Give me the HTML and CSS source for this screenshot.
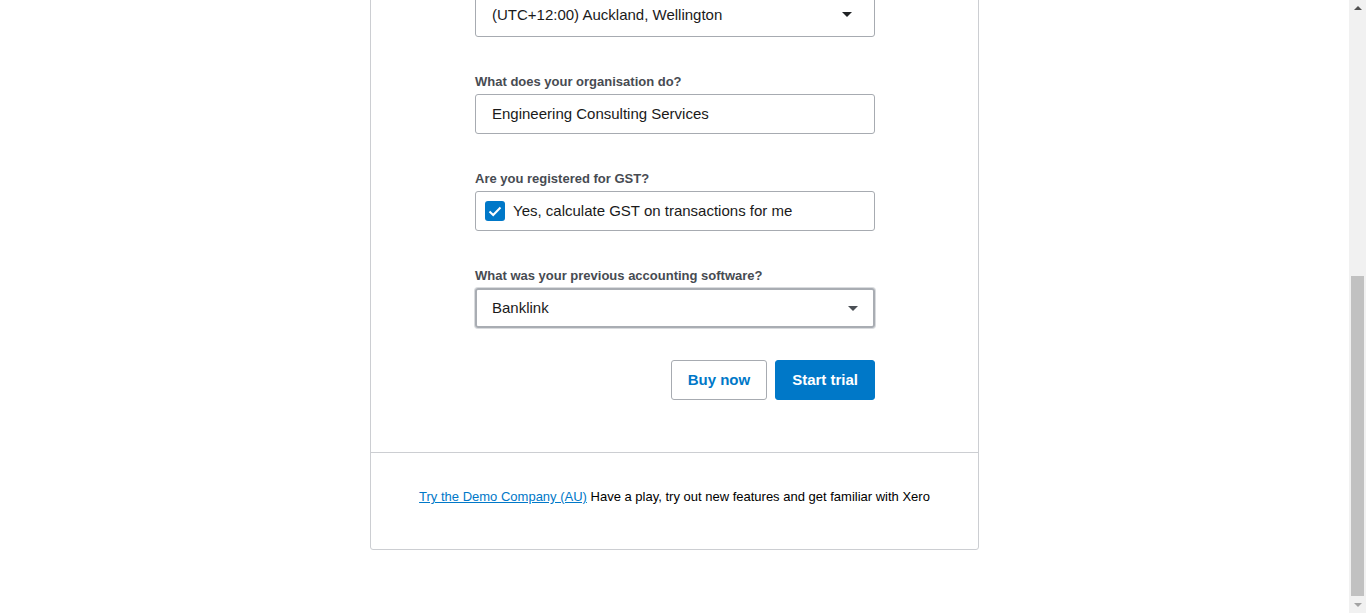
FILE: index.html
```html
<!DOCTYPE html>
<html lang="en">
<head>
<meta charset="utf-8">
<title>Set up your organisation</title>
<link rel="stylesheet" href="styles.css">
</head>
<body>
<div class="page">
  <main class="main">
    <section class="card">
      <div class="card-body">
        <div class="field">
          <div class="control select select-top">
            <span class="value">(UTC+12:00) Auckland, Wellington</span>
            <span class="caret"></span>
          </div>
        </div>
        <div class="field">
          <label class="label">What does your organisation do?</label>
          <div class="control">
            <span class="value">Engineering Consulting Services</span>
          </div>
        </div>
        <div class="field">
          <label class="label">Are you registered for GST?</label>
          <div class="control check-control">
            <span class="checkbox">
              <svg width="14" height="11" viewBox="0 0 14 11"><path d="M1.5 5.5 L5.2 9 L12.5 1.5" fill="none" stroke="#fff" stroke-width="2"/></svg>
            </span>
            <span class="value check-text">Yes, calculate GST on transactions for me</span>
          </div>
        </div>
        <div class="field field-last">
          <label class="label">What was your previous accounting software?</label>
          <div class="control select focused">
            <span class="value">Banklink</span>
            <span class="caret caret-focus"></span>
          </div>
        </div>
        <div class="actions">
          <button class="btn btn-secondary">Buy now</button>
          <button class="btn btn-primary">Start trial</button>
        </div>
      </div>
      <div class="card-footer">
        <a class="demo-link" href="#">Try the Demo Company (AU)</a> Have a play, try out new features and get familiar with Xero
      </div>
    </section>
  </main>
  <div class="scrollbar">
    <span class="sb-up"></span>
    <div class="sb-track"><div class="sb-thumb"></div></div>
    <span class="sb-down"></span>
  </div>
</div>
</body>
</html>
```

FILE: styles.css
```css
html, body {
  margin: 0;
  padding: 0;
  height: 100%;
  overflow: hidden;
  background: #fff;
}
body {
  font-family: "Liberation Sans", Arial, sans-serif;
  color: #000;
}
.page {
  display: flex;
  height: 613px;
}
.main {
  flex: 1;
  display: flex;
  justify-content: center;
  align-items: flex-start;
  overflow: hidden;
}
.card {
  width: 607px;
  margin-top: -64px;
  border: 1px solid #ccced2;
  border-radius: 3px;
  background: #fff;
}
.card-body {
  padding: 60px 103px 52px 104px;
}
.field {
  margin-bottom: 36px;
}
.field-last {
  margin-bottom: 32px;
}
.label {
  display: block;
  font-size: 13px;
  line-height: 16px;
  font-weight: bold;
  color: #474b52;
  padding-top: 1px;
  margin-bottom: 4px;
}
.control {
  box-sizing: border-box;
  height: 40px;
  border: 1px solid #a7abb1;
  border-radius: 3px;
  display: flex;
  align-items: center;
  padding: 0 16px;
  font-size: 15px;
  color: #1a1a1a;
}
.value {
  margin-bottom: 2px;
}
.select {
  justify-content: space-between;
}
.select-top .value {
  margin-bottom: 5px;
}
.caret {
  width: 0;
  height: 0;
  border-left: 5px solid transparent;
  border-right: 5px solid transparent;
  border-top: 5px solid #202225;
  margin-right: 6px;
}
.select-top .caret {
  margin-bottom: 5px;
}
.caret-focus {
  border-top-color: #4b4f55;
  margin-right: 0;
}
.focused {
  border: 2px solid #a9adb3;
  box-shadow: 0 0 0 1px #d9dbde;
  padding-left: 15px;
  padding-right: 15px;
}
.check-control {
  padding-left: 9px;
}
.checkbox {
  box-sizing: border-box;
  width: 20px;
  height: 20px;
  border-radius: 3px;
  background: #0078c8;
  display: flex;
  align-items: center;
  justify-content: center;
  margin-right: 8px;
}
.actions {
  display: flex;
  justify-content: flex-end;
  gap: 8px;
}
.btn {
  box-sizing: border-box;
  height: 40px;
  border-radius: 3px;
  font-family: "Liberation Sans", Arial, sans-serif;
  font-size: 15px;
  font-weight: bold;
  padding: 0 16px 2px;
  cursor: pointer;
}
.btn-secondary {
  background: #fff;
  border: 1px solid #a7abb1;
  color: #0078c8;
}
.btn-primary {
  background: #0078c8;
  border: 1px solid #0078c8;
  color: #fff;
}
.card-footer {
  border-top: 1px solid #ccced2;
  padding: 35px 20px 43px;
  text-align: center;
  font-size: 13px;
  line-height: 18px;
  color: #000;
}
.demo-link {
  color: #0078c8;
  text-decoration: underline;
}
.scrollbar {
  width: 17px;
  background: #f1f1f1;
  display: flex;
  flex-direction: column;
  align-items: center;
}
.sb-up, .sb-down {
  width: 0;
  height: 0;
  border-left: 4px solid transparent;
  border-right: 4px solid transparent;
  margin: 6px 0;
}
.sb-up {
  border-bottom: 4px solid #505050;
}
.sb-down {
  border-top: 4px solid #a3a3a3;
}
.sb-track {
  flex: 1;
  width: 100%;
  display: flex;
  flex-direction: column;
  justify-content: flex-end;
  padding-bottom: 1px;
}
.sb-thumb {
  height: 320px;
  margin: 0 2px;
  background: #c1c1c1;
}
```
